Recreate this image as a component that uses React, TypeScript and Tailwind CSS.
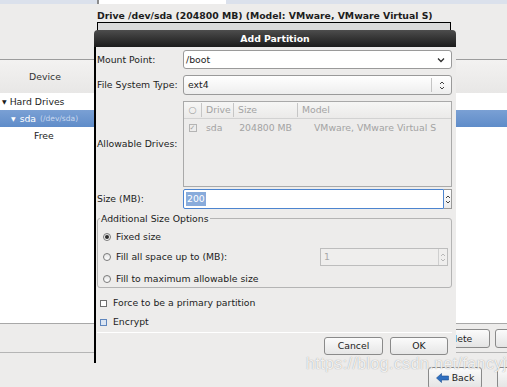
import React from "react";

const Chevron = () => (
  <svg width="8" height="6" viewBox="0 0 8 6">
    <path d="M1 1.5 L4 4.5 L7 1.5" fill="none" stroke="#2e2e2e" strokeWidth="1.3" />
  </svg>
);

const UpDown = ({ color = "#444" }: { color?: string }) => (
  <svg width="6" height="11" viewBox="0 0 6 11">
    <path d="M1 4 L3 2 L5 4 M1 7 L3 9 L5 7" fill="none" stroke={color} strokeWidth="1" />
  </svg>
);

const Radio = ({ checked }: { checked?: boolean }) => (
  <div className="flex h-[8px] w-[8px] items-center justify-center rounded-full border border-[#7a7a7a] bg-gradient-to-b from-[#e4e4e4] to-white">
    {checked && <div className="h-[4px] w-[4px] rounded-full bg-[#2b2b2b]" />}
  </div>
);

const Row = ({ label, children, h }: { label: string; children: React.ReactNode; h: string }) => (
  <div className={`grid grid-cols-[86px_1fr] items-center ${h}`}>
    <div>{label}</div>
    {children}
  </div>
);

export default function App() {
  return (
    <div className="relative h-[387px] w-[507px] overflow-hidden bg-[#edeceb] font-['DejaVu_Sans',sans-serif] text-[9.3px] text-[#1c1c1c]">
      {/* tab strip */}
      <div className="flex h-[4px] bg-[#dbe1ec]">
        <div className="w-[97px]" />
        <div className="w-[129px] border-l-2 border-[#8c8c8c] bg-white" />
      </div>

      {/* drive info */}
      <div className="h-[55px] pl-[97px] pt-[6px]">
        <div className="font-bold leading-[11px]">Drive /dev/sda (204800 MB) (Model: VMware, VMware Virtual S)</div>
        <div className="mt-[1px] h-[12px] w-[354px] border border-black bg-[#dadada]" />
      </div>

      {/* device tree */}
      <div className="flex h-[34px] items-center border-t border-[#9c9c9c] bg-gradient-to-b from-[#f3f2f1] to-[#e8e7e6]">
        <div className="w-[90px] text-center text-[#333]">Device</div>
      </div>
      <div className="h-[231px] border-b border-[#a8a8a8] bg-white">
        <div className="flex h-[17px] items-center pl-[2px]">
          <span className="mr-[3px] text-[6px]">▼</span>Hard Drives
        </div>
        <div className="flex h-[17px] items-center bg-gradient-to-b from-[#7aa0d4] to-[#5f8cc9] pl-[11px] text-white">
          <span className="mr-[4px] text-[6px]">▼</span>sda
          <span className="ml-[4px] text-[7.5px] text-[#c9d8ee]">(/dev/sda)</span>
        </div>
        <div className="flex h-[17px] items-center pl-[34px]">Free</div>
      </div>
      <div className="flex h-[29px] items-start gap-[5px] border-b border-[#b5b5b5] pl-[424px] pt-[5px]">
        <div className="flex h-[19px] w-[66px] shrink-0 items-center justify-center rounded-[3px] border border-[#8a8a8a] bg-gradient-to-b from-[#fbfbfb] to-[#e4e4e4]">
          Delete
        </div>
        <div className="h-[19px] w-[60px] shrink-0 rounded-[3px] border border-[#8a8a8a] bg-gradient-to-b from-[#fbfbfb] to-[#e4e4e4]" />
      </div>
      <div className="flex gap-[15px] pl-[428px] pt-[14px]">
        <div className="flex h-[22px] w-[54px] shrink-0 items-center justify-center gap-[3px] rounded-[3px] border border-[#8a8a8a] bg-gradient-to-b from-[#fbfbfb] to-[#e4e4e4]">
          <svg width="13" height="10" viewBox="0 0 13 10">
            <path d="M0.5 5 L5.5 0.5 V3 H12.5 V7 H5.5 V9.5 Z" fill="#2f6fc0" stroke="#1d4f91" strokeWidth="0.6" />
          </svg>
          Back
        </div>
        <div className="h-[22px] w-[60px] shrink-0 rounded-[3px] border border-[#8a8a8a] bg-gradient-to-b from-[#fbfbfb] to-[#e4e4e4]" />
      </div>

      {/* Add Partition dialog */}
      <div className="absolute left-[94px] top-[30px] flex h-[333px] w-[362px] flex-col">
        <div className="h-[17px] rounded-t-[4px] bg-gradient-to-b from-[#4d4d4d] to-[#1c1c1c] text-center font-bold leading-[17px] text-white">
          Add Partition
        </div>
        <div className="flex flex-1 flex-col border-l-2 border-black bg-[#edeceb] pl-[1px] pr-[4px]">
          <Row label="Mount Point:" h="mt-[3px] h-[19px]">
            <div className="flex h-full items-center justify-between rounded-[3px] border border-[#9a9a9a] bg-white pl-[2px] pr-[6px]">
              <span>/boot</span>
              <Chevron />
            </div>
          </Row>
          <Row label="File System Type:" h="mt-[6px] h-[20px]">
            <div className="flex h-full items-center rounded-[3px] border border-[#9a9a9a] bg-gradient-to-b from-white to-[#eeeeee]">
              <span className="flex-1 pl-[4px]">ext4</span>
              <div className="flex h-[14px] w-[20px] items-center justify-center border-l border-[#c4c4c4]">
                <UpDown />
              </div>
            </div>
          </Row>
          <Row label="Allowable Drives:" h="mt-[6px] h-[86px]">
            <div className="flex h-full flex-col border border-[#a9a9a9] text-[#a3a3a3]">
              <div className="grid h-[17px] grid-cols-[17px_32px_64px_1fr] items-center border-b border-[#d2d2d2] bg-gradient-to-b from-[#f6f6f5] to-[#ebeae9]">
                <div className="text-center">○</div>
                <div className="border-l border-[#c6c6c6] pl-[4px]">Drive</div>
                <div className="border-l border-[#c6c6c6] pl-[4px]">Size</div>
                <div className="border-l border-[#c6c6c6] pl-[4px]">Model</div>
              </div>
              <div className="grid h-[18px] grid-cols-[17px_32px_64px_1fr] items-center">
                <div className="flex justify-center">
                  <div className="flex h-[8px] w-[8px] items-center justify-center border border-[#b4b4b4] text-[7px] leading-none">✓</div>
                </div>
                <div className="pl-[5px]">sda</div>
                <div className="pr-[5px] text-right">204800 MB</div>
                <div className="pl-[17px]">VMware, VMware Virtual S</div>
              </div>
            </div>
          </Row>
          <Row label="Size (MB):" h="mt-[2px] h-[20px]">
            <div className="flex h-full">
              <div className="flex flex-1 items-center rounded-l-[2px] border border-[#4c84cf] bg-white pl-[2px]">
                <span className="bg-[#88abdb] px-px text-white">200</span>
              </div>
              <div className="flex w-[8px] items-center justify-center border border-l-0 border-[#9a9a9a] bg-gradient-to-b from-white to-[#ebebeb]">
                <UpDown />
              </div>
            </div>
          </Row>

          <fieldset className="mt-[4px] rounded-[3px] border border-[#b4b4b4] pb-[1px]">
            <legend className="ml-[2px] px-[1px] leading-[11px]">Additional Size Options</legend>
            <div className="flex flex-col pl-[5px] pr-[3px]">
              <div className="mt-[3px] flex h-[20px] items-center gap-[5px]">
                <Radio checked />
                Fixed size
              </div>
              <div className="flex h-[20px] items-center gap-[5px]">
                <Radio />
                Fill all space up to (MB):
                <div className="ml-auto flex h-[18px] w-[128px] border border-[#bdbdbd] bg-[#efeeed]">
                  <span className="flex-1 pl-[3px] leading-[16px] text-[#a8a8a8]">1</span>
                  <div className="flex w-[9px] items-center justify-center border-l border-[#cfcfcf]">
                    <UpDown color="#b8b8b8" />
                  </div>
                </div>
              </div>
              <div className="mt-[5px] flex h-[14px] items-center gap-[5px]">
                <Radio />
                Fill to maximum allowable size
              </div>
            </div>
          </fieldset>

          <div className="mt-[8px] flex h-[14px] items-center gap-[6px] pl-[3px]">
            <div className="h-[7px] w-[7px] border border-[#6e6e6e] bg-white" />
            Force to be a primary partition
          </div>
          <div className="mt-[5px] flex h-[14px] items-center gap-[6px] pl-[3px]">
            <div className="h-[7px] w-[7px] border border-[#5f86bd] bg-[#dbe5f2]" />
            Encrypt
          </div>
          <div className="mt-[3px] h-px bg-white" />
          <div className="mt-[4px] flex justify-end gap-[7px] pr-[4px]">
            <div className="flex h-[18px] w-[59px] items-center justify-center rounded-[3px] border border-[#8a8a8a] bg-gradient-to-b from-[#fbfbfb] to-[#e6e6e6]">
              Cancel
            </div>
            <div className="flex h-[18px] w-[58px] items-center justify-center rounded-[3px] border border-[#8a8a8a] bg-gradient-to-b from-[#fbfbfb] to-[#e6e6e6]">
              OK
            </div>
          </div>
        </div>
      </div>

      {/* watermark */}
      <div className="pointer-events-none absolute left-[306px] top-[352px] whitespace-nowrap font-['Liberation_Sans',sans-serif] text-[16px] tracking-[0.4px] text-white/85 [text-shadow:0_0_1px_rgba(100,100,100,0.7)]">
        https://blog.csdn.net/fancyjt
      </div>
    </div>
  );
}
